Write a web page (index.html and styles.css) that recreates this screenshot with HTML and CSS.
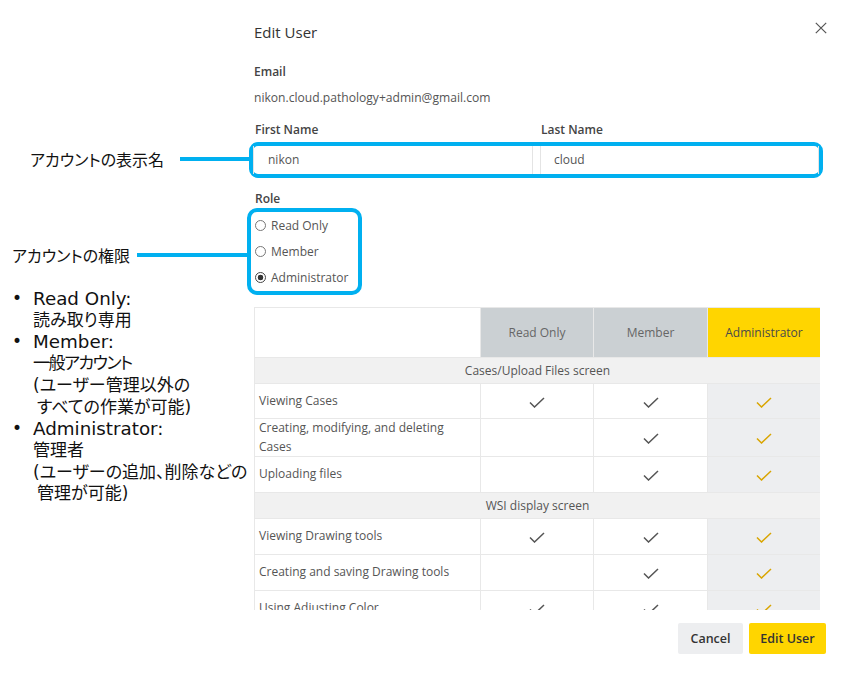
FILE: index.html
```html
<!DOCTYPE html>
<html lang="ja">
<head>
<meta charset="utf-8">
<title>Edit User</title>
<link rel="stylesheet" href="styles.css">
</head>
<body>
<div class="page">
  <header class="dlg-head">
    <h1 class="title">Edit User</h1>
    <button class="close" aria-label="Close">
      <svg width="12" height="12" viewBox="0 0 12 12"><path d="M0.8 0.8 L11.2 11.2 M11.2 0.8 L0.8 11.2" stroke="#555" stroke-width="1.2" fill="none"/></svg>
    </button>
  </header>

  <section class="email">
    <div class="field-label">Email</div>
    <div class="email-value">nikon.cloud.pathology+admin@gmail.com</div>
  </section>

  <div class="name-labels">
    <span class="field-label">First Name</span>
    <span class="field-label">Last Name</span>
  </div>

  <div class="callout callout-name">
    <span class="callout-text">アカウントの表示名</span>
    <span class="callout-line"></span>
  </div>
  <div class="name-box hl">
    <div class="input first">nikon</div>
    <div class="input">cloud</div>
  </div>

  <div class="field-label role-label">Role</div>

  <div class="callout callout-role">
    <span class="callout-text">アカウントの権限</span>
    <span class="callout-line"></span>
  </div>
  <div class="role-box hl">
    <div class="radio"><span class="dot"></span>Read Only</div>
    <div class="radio"><span class="dot"></span>Member</div>
    <div class="radio"><span class="dot on"></span>Administrator</div>
  </div>

  <ul class="notes">
    <li><div><div class="lat">Read Only:</div><div>読み取り専用</div></div></li>
    <li><div><div class="lat">Member:</div><div class="kana">一般アカウント</div><div>(ユーザー管理以外の</div><div class="indent">すべての作業が可能)</div></div></li>
    <li><div><div class="lat">Administrator:</div><div>管理者</div><div>(ユーザーの追加、削除などの</div><div class="indent">管理が可能)</div></div></li>
  </ul>

  <div class="table-wrap">
    <table class="perm">
      <colgroup><col class="c1"><col class="c2"><col class="c3"><col class="c4"></colgroup>
      <thead>
        <tr><th class="blank"></th><th class="gray">Read Only</th><th class="gray">Member</th><th class="yellow">Administrator</th></tr>
      </thead>
      <tbody>
        <tr class="sec"><td colspan="4">Cases/Upload Files screen</td></tr>
        <tr class="r35"><td class="feat">Viewing Cases</td><td class="chk"><svg class="ck" viewBox="0 0 16 11"><polyline points="1,5.5 5.5,10 15,1"/></svg></td><td class="chk"><svg class="ck" viewBox="0 0 16 11"><polyline points="1,5.5 5.5,10 15,1"/></svg></td><td class="chk adm"><svg class="ck" viewBox="0 0 16 11"><polyline points="1,5.5 5.5,10 15,1"/></svg></td></tr>
        <tr class="r38"><td class="feat">Creating, modifying, and deleting<br>Cases</td><td class="chk"></td><td class="chk"><svg class="ck" viewBox="0 0 16 11"><polyline points="1,5.5 5.5,10 15,1"/></svg></td><td class="chk adm"><svg class="ck" viewBox="0 0 16 11"><polyline points="1,5.5 5.5,10 15,1"/></svg></td></tr>
        <tr class="r36"><td class="feat">Uploading files</td><td class="chk"></td><td class="chk"><svg class="ck" viewBox="0 0 16 11"><polyline points="1,5.5 5.5,10 15,1"/></svg></td><td class="chk adm"><svg class="ck" viewBox="0 0 16 11"><polyline points="1,5.5 5.5,10 15,1"/></svg></td></tr>
        <tr class="sec"><td colspan="4">WSI display screen</td></tr>
        <tr class="r36"><td class="feat">Viewing Drawing tools</td><td class="chk"><svg class="ck" viewBox="0 0 16 11"><polyline points="1,5.5 5.5,10 15,1"/></svg></td><td class="chk"><svg class="ck" viewBox="0 0 16 11"><polyline points="1,5.5 5.5,10 15,1"/></svg></td><td class="chk adm"><svg class="ck" viewBox="0 0 16 11"><polyline points="1,5.5 5.5,10 15,1"/></svg></td></tr>
        <tr class="r36"><td class="feat">Creating and saving Drawing tools</td><td class="chk"></td><td class="chk"><svg class="ck" viewBox="0 0 16 11"><polyline points="1,5.5 5.5,10 15,1"/></svg></td><td class="chk adm"><svg class="ck" viewBox="0 0 16 11"><polyline points="1,5.5 5.5,10 15,1"/></svg></td></tr>
        <tr class="r36"><td class="feat">Using Adjusting Color</td><td class="chk"><svg class="ck" viewBox="0 0 16 11"><polyline points="1,5.5 5.5,10 15,1"/></svg></td><td class="chk"><svg class="ck" viewBox="0 0 16 11"><polyline points="1,5.5 5.5,10 15,1"/></svg></td><td class="chk adm"><svg class="ck" viewBox="0 0 16 11"><polyline points="1,5.5 5.5,10 15,1"/></svg></td></tr>
      </tbody>
    </table>
  </div>

  <footer class="actions">
    <button class="btn cancel">Cancel</button>
    <button class="btn primary">Edit User</button>
  </footer>
</div>
</body>
</html>
```

FILE: styles.css
```css
* { box-sizing: border-box; }

body {
  margin: 0;
  background: #ffffff;
}

.page {
  display: grid;
  grid-template-columns: 249px 578px;
  font-family: "Open Sans", "Noto Sans", sans-serif;
  color: #555;
}

/* ---------- dialog head ---------- */
.dlg-head {
  grid-column: 2;
  display: flex;
  justify-content: space-between;
  align-items: flex-start;
  padding: 21px 0 0 5px;
}

.title {
  margin: 0;
  font-size: 15px;
  font-weight: 400;
  line-height: 22px;
  color: #333;
}

.close {
  border: 0;
  background: none;
  padding: 0;
  margin-top: 1px;
  width: 12px;
  height: 12px;
  display: block;
}

.close svg { display: block; }

/* ---------- fields ---------- */
.field-label {
  font-size: 12px;
  font-weight: 600;
  line-height: 18px;
  color: #444;
}

.email {
  grid-column: 2;
  padding-left: 5px;
  margin-top: 20px;
}

.email-value {
  font-size: 12.1px;
  line-height: 18px;
  margin-top: 8px;
  color: #555;
}

.name-labels {
  grid-column: 2;
  display: grid;
  grid-template-columns: 286px 1fr;
  padding-left: 6px;
  margin-top: 14px;
}

.hl {
  border: 4px solid #00b0f0;
  border-radius: 9px;
}

.name-box {
  grid-column: 2;
  margin: 3px 4px 0 0;
  display: grid;
  grid-template-columns: 280px 1fr;
  column-gap: 7px;
}

.input {
  height: 28px;
  border-left: 1px solid #e4e4e4;
  border-right: 1px solid #e4e4e4;
  padding-left: 13px;
  font-size: 12px;
  line-height: 28px;
  color: #555;
}

.input.first { padding-left: 14px; }

.role-label {
  grid-column: 2;
  padding-left: 6px;
  margin-top: 12px;
}

.role-box {
  grid-column: 2;
  justify-self: start;
  width: 115px;
  margin-left: -2px;
  padding: 0 0 1px 4px;
  border-radius: 10px;
}

.radio {
  display: flex;
  align-items: center;
  gap: 5px;
  height: 26px;
  font-size: 12px;
  color: #555;
}

.dot {
  width: 11px;
  height: 11px;
  border: 1px solid #777;
  border-radius: 50%;
  flex: 0 0 11px;
}

.dot.on {
  border-color: #444;
  background: radial-gradient(circle, #333 0 2.6px, transparent 3.1px);
}

/* ---------- callouts ---------- */
.callout {
  grid-column: 1;
  align-self: center;
  display: flex;
  align-items: center;
}

.callout-text {
  font-family: "Noto Sans CJK JP", sans-serif;
  font-size: 16px;
  line-height: 24px;
  color: #111;
  white-space: nowrap;
  flex: 0 0 auto;
  font-feature-settings: "palt";
}

.callout-line {
  height: 4px;
  background: #00b0f0;
  margin-left: auto;
  flex: 0 0 auto;
}

.callout-name { padding-left: 30px; }
.callout-name .callout-line { width: 69px; }

.callout-role { padding-left: 12px; margin-top: 7px; }
.callout-role .callout-line { width: 112px; }

.notes {
  grid-column: 1;
  align-self: start;
  margin: -7px 0 0;
  padding: 0;
  list-style: none;
  font-family: "DejaVu Sans", "Noto Sans CJK JP", sans-serif;
  font-size: 17px;
  line-height: 21.7px;
  color: #111;
  font-feature-settings: "palt";
  white-space: nowrap;
}

.notes li {
  display: flex;
  padding-left: 12px;
}

.notes li::before {
  content: "•";
  flex: 0 0 21px;
}

.notes .lat { font-size: 18.3px; }
.notes .kana { letter-spacing: -1.5px; }
.notes .indent { padding-left: 4px; }

/* ---------- table ---------- */
.table-wrap {
  grid-column: 2;
  margin: 12px 0 0 5px;
  width: 566px;
  height: 303px;
  overflow: hidden;
}

.perm {
  border-collapse: collapse;
  table-layout: fixed;
  width: 566px;
  font-size: 12px;
  color: #555;
}

.perm col.c1 { width: 226px; }
.perm col.c2 { width: 113px; }
.perm col.c3 { width: 114px; }
.perm col.c4 { width: 113px; }

.perm th,
.perm td {
  border: 1px solid #e8e8e8;
  padding: 0 4px;
}

.perm th {
  height: 50px;
  font-weight: 400;
  text-align: center;
  color: #666;
}

.perm th.blank { background: #fff; }
.perm th.gray { background: #cbd0d3; }
.perm th.yellow { background: #ffd500; color: #4a4a4a; }

.perm tr.sec td {
  height: 26px;
  background: #f1f1f1;
  text-align: center;
  color: #555;
}

.perm tr.r35 td { height: 35px; }
.perm tr.r36 td { height: 36px; }
.perm tr.r38 td { height: 38px; }

.perm td.feat {
  line-height: 18.5px;
  text-align: left;
  padding-left: 4px;
}

.perm td.chk {
  text-align: center;
}

.perm td.adm { background: #edeef0; }

.ck {
  width: 16px;
  height: 11px;
  display: inline-block;
  vertical-align: middle;
  fill: none;
  stroke: #555;
  stroke-width: 1.5;
}

.adm .ck { stroke: #d9a500; }

/* ---------- footer ---------- */
.actions {
  grid-column: 2;
  display: flex;
  justify-content: flex-end;
  gap: 6px;
  margin-top: 13px;
  padding-right: 1px;
}

.btn {
  height: 31px;
  border: 0;
  border-radius: 2px;
  font-family: "Open Sans", sans-serif;
  font-size: 12.5px;
  font-weight: 600;
  color: #333;
  padding: 0;
}

.btn.cancel { width: 65px; background: #edeef0; }
.btn.primary { width: 77px; background: #ffd500; }
```
